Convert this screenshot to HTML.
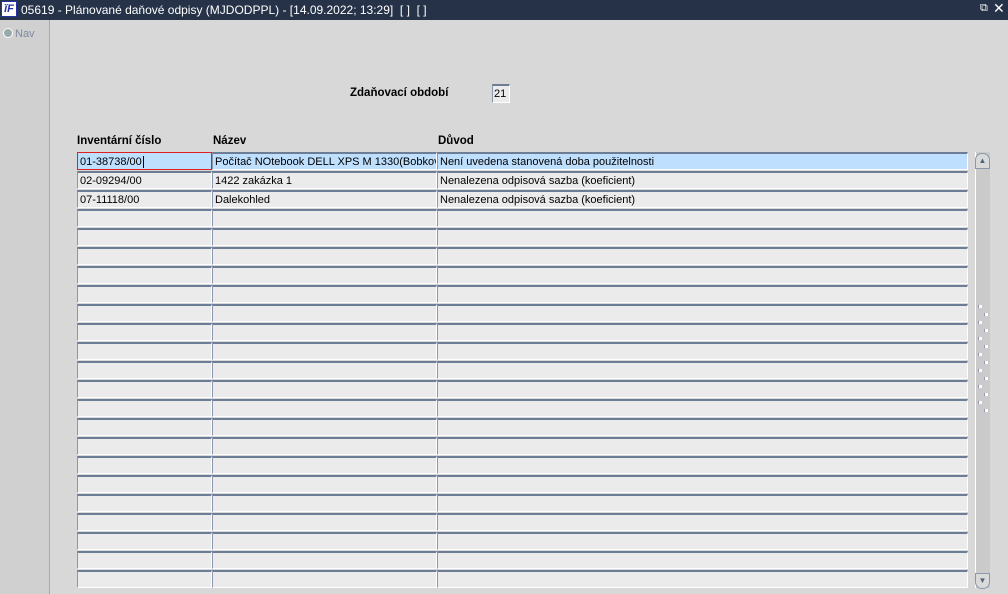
<!DOCTYPE html><html><head><meta charset="utf-8"><style>
body{margin:0;width:1008px;height:594px;overflow:hidden;background:#d8d8d8;font-family:"Liberation Sans",Arial,sans-serif;font-size:11px;position:relative}
.tb{position:absolute;left:0;top:0;width:1008px;height:20px;background:#253248;color:#fff;font-size:12px}
.tb .t{position:absolute;left:21px;top:3px}
.logo{position:absolute;left:1px;top:1px;width:16px;height:16px;background:#fff;border:1px solid #2233aa;box-sizing:border-box;color:#2233aa;font-weight:bold;font-style:italic;font-size:11px;line-height:14px;text-align:center}
.lp{position:absolute;left:0;top:20px;width:49px;height:574px;background:#d0d0d0;border-right:1px solid #a8a8b0}
.nav{position:absolute;left:3px;top:28px;color:#7d8aa0;font-size:11px}
.nav i{display:inline-block;width:8px;height:8px;border-radius:50%;background:#9aa;border:1px solid #fff;vertical-align:-1px;margin-right:2px}
.f{position:absolute;height:18px;box-sizing:border-box;background:#ebebeb;border-top:2px solid #6d7d96;border-left:1px solid #8a98ad;border-right:1px solid #fff;border-bottom:1px solid #fff;padding:1px 0 0 2px;line-height:14px;white-space:nowrap;overflow:hidden}
.h{position:absolute;font-weight:bold;font-size:11.5px}
.sel{background:#bfdfff}
</style></head><body>
<div class="tb"><div class="logo">ĭF</div><span class="t">05619 - Plánované daňové odpisy (MJDODPPL) - [14.09.2022; 13:29]&nbsp; [ ]&nbsp; [ ]</span>
<span style="position:absolute;left:980px;top:2px;font-size:11px">⧉</span><span style="position:absolute;left:993px;top:0px;font-size:14px">✕</span></div>
<div class="lp"></div>
<div class="nav"><i></i>Nav</div>
<div class="h" style="left:350px;top:87px">Zdaňovací období</div>
<div class="f" style="left:492px;top:84px;width:18px;height:19px;padding-left:1px">21</div>
<div class="h" style="left:77px;top:135px">Inventární číslo</div>
<div class="h" style="left:213px;top:135px">Název</div>
<div class="h" style="left:438px;top:135px">Důvod</div>
<div style="position:absolute;left:975px;top:152px;width:14px;height:436px;background:#cacaca;border-left:1px solid #fff"></div>
<div style="position:absolute;left:975px;top:153px;width:13px;height:14px;border:1px solid #8a98ad;border-radius:7px 7px 0 0;background:#dadada;font-size:8px;text-align:center;color:#55657d;line-height:14px">▲</div>
<div style="position:absolute;left:975px;top:573px;width:13px;height:14px;border:1px solid #8a98ad;border-radius:0 0 7px 7px;background:#dadada;font-size:8px;text-align:center;color:#55657d;line-height:14px">▼</div>
<div id="g"></div>
<script>
var d=[["01-38738/00","Počítač NOtebook DELL XPS M 1330(Bobková","Není uvedena stanovená doba použitelnosti"],["02-09294/00","1422 zakázka 1","Nenalezena odpisová sazba (koeficient)"],["07-11118/00","Dalekohled","Nenalezena odpisová sazba (koeficient)"]];
var h="";for(var i=0;i<23;i++){var y=152+i*19,r=d[i]||["","",""],s=i==0?" sel":"";
h+='<div class="f'+s+'" style="left:77px;top:'+y+'px;width:135px'+(i==0?';border:1px solid #e02020;background:#bfdfff;padding-top:2px':'')+'">'+r[0]+(i==0?'<span style="border-left:1px solid #000;margin-left:1px"></span>':'')+'</div>';
h+='<div class="f'+s+'" style="left:212px;top:'+y+'px;width:225px">'+r[1]+'</div>';
h+='<div class="f'+s+'" style="left:437px;top:'+y+'px;width:531px">'+r[2]+'</div>';}
for(var k=0;k<14;k++){h+='<div style="position:absolute;left:'+(k%2?984:978)+'px;top:'+(305+k*8)+'px;width:3px;height:3px;background:#fff;border-left:1px solid #8a98ad"></div>'}
document.getElementById("g").innerHTML=h;
</script>
</body></html>
